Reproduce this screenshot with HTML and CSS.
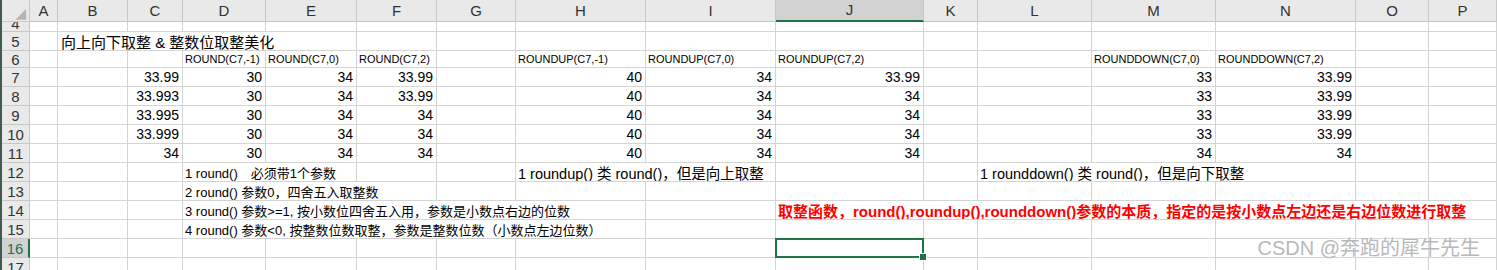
FILE: index.html
```html
<!DOCTYPE html>
<html lang="zh">
  <head>
    <meta charset="UTF-8" />
    <title>取整函数</title>
    <link rel="stylesheet" href="styles.css">
  </head>
  <body>
    <div class="sheet">
      <!-- column headers -->
      <div class="hd corner">
        <svg width="28" height="22" viewBox="0 0 28 22"><polygon points="25,9 25,20 14,20" fill="#b4b4b4"/></svg>
      </div>
      <div class="hd">A</div><div class="hd">B</div><div class="hd">C</div><div class="hd">D</div>
      <div class="hd">E</div><div class="hd">F</div><div class="hd">G</div><div class="hd">H</div>
      <div class="hd">I</div><div class="hd active">J</div><div class="hd">K</div><div class="hd">L</div>
      <div class="hd">M</div><div class="hd">N</div><div class="hd">O</div><div class="hd">P</div>

      <!-- row 4 -->
      <div class="rh cut">4</div>
      <div></div><div></div><div></div><div></div><div></div><div></div><div></div><div></div>
      <div></div><div></div><div></div><div></div><div></div><div></div><div></div><div></div>

      <!-- row 5 -->
      <div class="rh">5</div>
      <div></div>
      <div class="s4 title">向上向下取整 &amp; 整数位取整美化</div>
      <div></div><div></div><div></div><div></div><div></div><div></div><div></div><div></div><div></div><div></div><div></div>

      <!-- row 6 -->
      <div class="rh">6</div>
      <div></div><div></div><div></div>
      <div class="fn">ROUND(C7,-1)</div>
      <div class="fn">ROUND(C7,0)</div>
      <div class="fn">ROUND(C7,2)</div>
      <div></div>
      <div class="fn">ROUNDUP(C7,-1)</div>
      <div class="fn">ROUNDUP(C7,0)</div>
      <div class="fn">ROUNDUP(C7,2)</div>
      <div></div><div></div>
      <div class="fn">ROUNDDOWN(C7,0)</div>
      <div class="fn">ROUNDDOWN(C7,2)</div>
      <div></div><div></div>

      <!-- row 7 -->
      <div class="rh">7</div>
      <div></div><div></div>
      <div class="n">33.99</div><div class="n">30</div><div class="n">34</div><div class="n">33.99</div>
      <div></div>
      <div class="n">40</div><div class="n">34</div><div class="n">33.99</div>
      <div></div><div></div>
      <div class="n">33</div><div class="n">33.99</div>
      <div></div><div></div>

      <!-- row 8 -->
      <div class="rh">8</div>
      <div></div><div></div>
      <div class="n">33.993</div><div class="n">30</div><div class="n">34</div><div class="n">33.99</div>
      <div></div>
      <div class="n">40</div><div class="n">34</div><div class="n">34</div>
      <div></div><div></div>
      <div class="n">33</div><div class="n">33.99</div>
      <div></div><div></div>

      <!-- row 9 -->
      <div class="rh">9</div>
      <div></div><div></div>
      <div class="n">33.995</div><div class="n">30</div><div class="n">34</div><div class="n">34</div>
      <div></div>
      <div class="n">40</div><div class="n">34</div><div class="n">34</div>
      <div></div><div></div>
      <div class="n">33</div><div class="n">33.99</div>
      <div></div><div></div>

      <!-- row 10 -->
      <div class="rh">10</div>
      <div></div><div></div>
      <div class="n">33.999</div><div class="n">30</div><div class="n">34</div><div class="n">34</div>
      <div></div>
      <div class="n">40</div><div class="n">34</div><div class="n">34</div>
      <div></div><div></div>
      <div class="n">33</div><div class="n">33.99</div>
      <div></div><div></div>

      <!-- row 11 -->
      <div class="rh">11</div>
      <div></div><div></div>
      <div class="n">34</div><div class="n">30</div><div class="n">34</div><div class="n">34</div>
      <div></div>
      <div class="n">40</div><div class="n">34</div><div class="n">34</div>
      <div></div><div></div>
      <div class="n">34</div><div class="n">34</div>
      <div></div><div></div>

      <!-- row 12 -->
      <div class="rh">12</div>
      <div></div><div></div><div></div>
      <div class="s2 note">1 round()　必须带1个参数</div>
      <div></div><div></div>
      <div class="s2 note2">1 roundup() 类 round()，但是向上取整</div>
      <div></div><div></div>
      <div class="s3 note2">1 rounddown() 类 round()，但是向下取整</div>
      <div></div><div></div>

      <!-- row 13 -->
      <div class="rh">13</div>
      <div></div><div></div><div></div>
      <div class="s3 note">2 round() 参数0，四舍五入取整数</div>
      <div></div><div></div><div></div><div></div><div></div><div></div><div></div><div></div><div></div><div></div>

      <!-- row 14 -->
      <div class="rh">14</div>
      <div></div><div></div><div></div>
      <div class="s5 note">3 round() 参数&gt;=1, 按小数位四舍五入用，参数是小数点右边的位数</div>
      <div></div>
      <div class="s7 red">取整函数，round(),roundup(),rounddown()参数的本质，指定的是按小数点左边还是右边位数进行取整</div>

      <!-- row 15 -->
      <div class="rh">15</div>
      <div></div><div></div><div></div>
      <div class="s5 note">4 round() 参数&lt;0, 按整数位数取整，参数是整数位数（小数点左边位数）</div>
      <div></div><div></div><div></div><div></div><div></div><div></div><div></div><div></div>

      <!-- row 16 -->
      <div class="rh active">16</div>
      <div></div><div></div><div></div><div></div><div></div><div></div><div></div><div></div><div></div>
      <div class="sel"></div>
      <div></div><div></div><div></div><div></div><div></div><div></div>

      <!-- row 17 -->
      <div class="rh">17</div>
      <div></div><div></div><div></div><div></div><div></div><div></div><div></div><div></div>
      <div></div><div></div><div></div><div></div><div></div><div></div><div></div><div></div>
    </div>

    <div class="mark">CSDN @奔跑的犀牛先生</div>
  </body>
</html>
```

FILE: styles.css
```css
* {
  margin: 0;
  padding: 0;
  box-sizing: border-box;
}

body {
  font-family: "Liberation Sans", "Noto Sans CJK SC", sans-serif;
  background: #fff;
  overflow: hidden;
  height: 270px;
  position: relative;
}

.sheet {
  display: grid;
  grid-template-columns: 28px 28px 70px 55px 83px 91px 80px 79px 130px 130px 148px 54px 114px 124px 140px 73px 1fr;
  grid-template-rows: 22px 10px 19px 17px repeat(11, 19px);
  border-left: 2px solid #3f5a4e;
  height: 270px;
  overflow: hidden;
}

.sheet > div {
  display: flex;
  align-items: center;
  border-right: 1px solid #d4d4d4;
  border-bottom: 1px solid #d4d4d4;
  padding: 0 3px 0 2px;
  white-space: nowrap;
  overflow: hidden;
  font-size: 14px;
  color: #000;
}

.sheet > .n {
  justify-content: flex-end;
}

/* headers */
.sheet > .hd {
  background: #e9e9e9;
  border-color: #c8c8c8;
  justify-content: center;
  align-items: flex-end;
  padding: 0 0 2px 0;
  font-size: 15px;
  color: #333;
}

.sheet > .corner {
  padding: 0;
  align-items: stretch;
}

.sheet > .rh {
  background: #e9e9e9;
  border-color: #c8c8c8;
  justify-content: center;
  padding: 0;
  font-size: 15px;
  line-height: 15px;
  color: #333;
}

.sheet > .cut {
  align-items: flex-end;
}

.sheet > .hd.active {
  background: #d2d2d2;
  border-bottom: 2px solid #217346;
}

.sheet > .rh.active {
  background: #d2d2d2;
  border-right: 2px solid #217346;
  color: #217346;
}

/* spans for text running over cells */
.s2 { grid-column: span 2; }
.s3 { grid-column: span 3; }
.s4 { grid-column: span 4; }
.s5 { grid-column: span 5; }
.s7 { grid-column: span 7; }

.sheet > .title {
  font-size: 15px;
  padding-left: 3px;
}

.sheet > .fn {
  font-size: 11px;
}

.sheet > .note {
  font-size: 13px;
}

.sheet > .note2 {
  font-size: 14.5px;
}

.sheet > .red {
  color: #ff0000;
  font-weight: bold;
  font-size: 15px;
}

/* selected cell */
.sheet > .sel {
  position: relative;
  overflow: visible;
}

.sel::before {
  content: "";
  position: absolute;
  left: -1px;
  top: -1px;
  right: -1px;
  bottom: -1px;
  border: 2px solid #217346;
}

.sel::after {
  content: "";
  position: absolute;
  right: -4px;
  bottom: -4px;
  width: 6px;
  height: 6px;
  background: #217346;
  border: 1px solid #fff;
}

.mark {
  position: absolute;
  right: 17px;
  bottom: 9px;
  font-size: 20px;
  color: #b8b8b8;
  text-shadow: 0 0 2px #fff;
}
```
